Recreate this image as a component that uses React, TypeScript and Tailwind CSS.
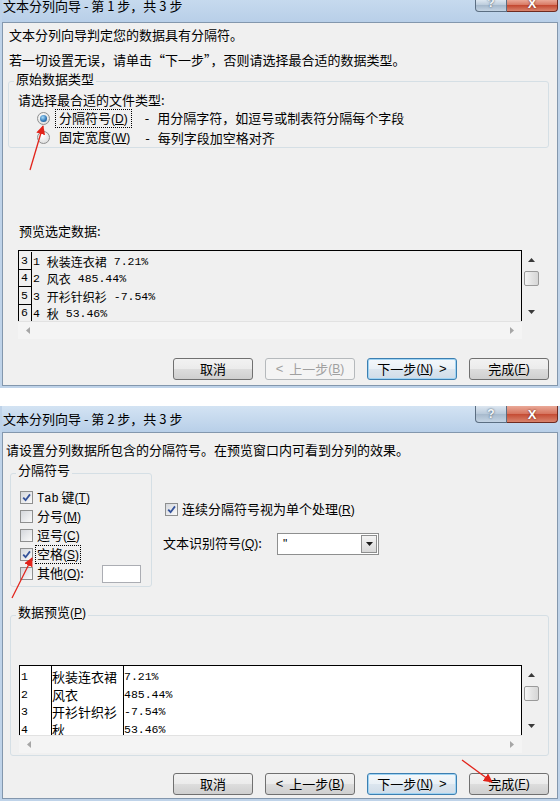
import type { ReactNode } from "react";

const ui = "font-['Microsoft_YaHei','Noto_Sans_CJK_SC',sans-serif]";
const mono = "font-['Liberation_Mono','Noto_Sans_CJK_SC',monospace]";

function Key({ k }: { k: string }) {
  return (
    <span className="font-['Liberation_Sans',sans-serif] text-[12px]">
      (<u>{k}</u>)
    </span>
  );
}

function CaptionButtons({ cropped }: { cropped?: boolean }) {
  return (
    <div className={cropped ? "flex h-[12px] overflow-hidden" : "flex h-[17px] overflow-hidden"}>
      <div className="flex h-full w-[32px] items-end justify-center rounded-bl-[4px] border border-t-0 border-[#5b6e82] bg-[linear-gradient(#dde7f1,#b8c9da_50%,#a6b9cc_50%,#c4d4e4)]">
        <span className="mb-[1px] font-['Liberation_Sans',sans-serif] text-[12px] font-bold leading-[13px] text-[#f4f7fa] [text-shadow:0_0_2px_#2e4258]">
          ?
        </span>
      </div>
      <div className="flex h-full w-[51px] items-end justify-center rounded-br-[4px] border border-t-0 border-l-0 border-[#6e2a20] bg-[linear-gradient(#eaa998,#d6735d_50%,#c44a32_50%,#d9846d)]">
        <span className="mb-[1px] font-['Liberation_Sans',sans-serif] text-[13px] font-bold leading-[13px] text-white [text-shadow:0_0_2px_#5a1a10]">
          X
        </span>
      </div>
    </div>
  );
}

function TitleBar({ title, cropped }: { title: string; cropped?: boolean }) {
  return (
    <div
      className={
        cropped
          ? "flex h-[22px] justify-between bg-[linear-gradient(#c6daee,#b8cfe8)]"
          : "flex h-[26px] justify-between bg-[linear-gradient(#d3e3f3,#b8cfe8)]"
      }
    >
      <div className={cropped ? "-mt-[2px] pl-[1px] leading-[16px]" : "pt-[5px] pl-[1px] leading-[16px]"}>{title}</div>
      <CaptionButtons cropped={cropped} />
    </div>
  );
}

function Btn({
  w,
  kind,
  children,
}: {
  w: string;
  kind?: "focus" | "off";
  children: ReactNode;
}) {
  const base = "flex h-[22px] items-center justify-center rounded-[3px] border leading-[16px]";
  if (kind === "off")
    return <div className={`${base} ${w} border-[#b5b9bc] bg-[#f4f4f4] text-[#a0a0a0]`}>{children}</div>;
  if (kind === "focus")
    return (
      <div
        className={`${base} ${w} border-[#3c7fb1] bg-[linear-gradient(#f4f8fb,#e9f0f6_50%,#dce6ef_50%,#d0dce8)] shadow-[inset_0_0_0_1px_#9fd3f3]`}
      >
        {children}
      </div>
    );
  return (
    <div className={`${base} ${w} border-[#707070] bg-[linear-gradient(#f2f2f2,#ebebeb_50%,#dddddd_50%,#cfcfcf)]`}>
      {children}
    </div>
  );
}

function Buttons({ backOff }: { backOff?: boolean }) {
  return (
    <div className="flex justify-end gap-[12px] pr-[8px]">
      <Btn w="w-[80px]">取消</Btn>
      <Btn w="w-[90px]" kind={backOff ? "off" : undefined}>
        <span className="mr-[6px] font-['Liberation_Sans',sans-serif]">&lt;</span>上一步
        <Key k="B" />
      </Btn>
      <Btn w="w-[90px]" kind="focus">
        下一步
        <Key k="N" />
        <span className="ml-[6px] font-['Liberation_Sans',sans-serif]">&gt;</span>
      </Btn>
      <Btn w="w-[80px]">
        完成
        <Key k="F" />
      </Btn>
    </div>
  );
}

function Radio({ on }: { on?: boolean }) {
  return (
    <span className="flex h-[13px] w-[13px] shrink-0 items-center justify-center rounded-full border border-[#8e8f8f] bg-[radial-gradient(circle_at_40%_35%,#ffffff,#d6d6d6)]">
      {on && (
        <span className="h-[7px] w-[7px] rounded-full bg-[radial-gradient(circle_at_40%_35%,#a8dcfa,#2e74b4_60%,#1a4b7c)]" />
      )}
    </span>
  );
}

function Check({ on }: { on?: boolean }) {
  return (
    <span className="flex h-[13px] w-[13px] shrink-0 items-center justify-center border border-[#8e8f8f] bg-[linear-gradient(135deg,#d4d7dc,#fafafa)]">
      {on && (
        <svg width="9" height="9" viewBox="0 0 9 9">
          <path d="M1.2 4.6 L3.6 7.2 L8 1.4" fill="none" stroke="#34529a" strokeWidth="1.8" />
        </svg>
      )}
    </span>
  );
}

function Tri({ dir, color }: { dir: "up" | "down" | "left" | "right"; color: string }) {
  const d = {
    up: "M0 4 L3.5 0 L7 4 Z",
    down: "M0 0 L7 0 L3.5 4 Z",
    left: "M4 0 L4 7 L0 3.5 Z",
    right: "M0 0 L4 3.5 L0 7 Z",
  }[dir];
  const vert = dir === "up" || dir === "down";
  return (
    <svg width={vert ? 7 : 4} height={vert ? 4 : 7} viewBox={vert ? "0 0 7 4" : "0 0 4 7"}>
      <path d={d} fill={color} />
    </svg>
  );
}

function VScroll({ h }: { h: string }) {
  return (
    <div className={`flex w-[18px] flex-col items-center ${h}`}>
      <div className="flex h-[19px] items-center">
        <Tri dir="up" color="#3a3a3a" />
      </div>
      <div className="mt-[2px] h-[15px] w-[15px] rounded-[2px] border border-[#9a9a9a] bg-[linear-gradient(90deg,#f6f6f6,#e4e4e4_50%,#d6d6d6)]" />
      <div className="flex-1" />
      <div className="flex h-[19px] items-center">
        <Tri dir="down" color="#3a3a3a" />
      </div>
    </div>
  );
}

function HScroll() {
  return (
    <div className="flex h-[18px] items-center justify-between border-t border-[#e2e2e2] bg-[#f4f4f4] px-[8px]">
      <Tri dir="left" color="#a6a6a6" />
      <Tri dir="right" color="#a6a6a6" />
    </div>
  );
}

const rows1 = [
  ["3", "1", "秋装连衣裙", "7.21%"],
  ["4", "2", "风衣", "485.44%"],
  ["5", "3", "开衫针织衫", "-7.54%"],
  ["6", "4", "秋", "53.46%"],
];

function PreviewOne() {
  return (
    <div className="ml-[15px] flex w-[522px]">
      <div className="flex w-[504px] flex-col">
        <div className="h-[71px] overflow-hidden border-l border-r border-t border-black bg-[#f0f0f0] pt-[1px]">
          {rows1.map(([n, i, name, v]) => (
            <div key={n} className="flex h-[17.5px] items-end whitespace-pre leading-[17px]">
              <span className={`w-[13px] border-r border-b border-black pl-[2px] text-[11.5px] ${mono}`}>{n}</span>
              <span className={`pl-[1px] text-[11.5px] ${mono}`}>{i + " "}</span>
              <span className="text-[12px]">{name}</span>
              <span className={`text-[11.5px] ${mono}`}>{" " + v}</span>
            </div>
          ))}
        </div>
        <HScroll />
      </div>
      <VScroll h="h-[71px]" />
    </div>
  );
}

function PreviewTwo() {
  return (
    <div className="ml-[8px] flex w-[521px]">
      <div className="flex w-[503px] flex-col">
        <div className="flex h-[70px] overflow-hidden border-l border-r border-t border-black bg-white">
          <div className={`w-[32px] border-r border-black pt-[2px] pl-[1px] text-[11.5px] leading-[17.5px] ${mono}`}>
            {rows1.map(([n, i]) => (
              <div key={n}>{i}</div>
            ))}
          </div>
          <div className="w-[72px] border-r border-black pt-[2px] text-[13px] leading-[17.5px]">
            {rows1.map(([n, , name]) => (
              <div key={n}>{name}</div>
            ))}
          </div>
          <div className={`pt-[2px] text-[11.5px] leading-[17.5px] ${mono}`}>
            {rows1.map(([n, , , v]) => (
              <div key={n}>{v}</div>
            ))}
          </div>
        </div>
        <HScroll />
      </div>
      <VScroll h="h-[70px]" />
    </div>
  );
}

function DialogOne() {
  return (
    <div className="flex h-[388px] flex-col bg-[#bfd3e9] px-[2px] pb-[2px]">
      <TitleBar title="文本分列向导 - 第 1 步，共 3 步" cropped />
      <div className="flex flex-1 flex-col border border-[#8397ad] bg-[#f0f0f0]">
        <p className="mt-[4px] pl-[6px] leading-[16px]">文本分列向导判定您的数据具有分隔符。</p>
        <p className="mt-[9px] pl-[6px] leading-[16px]">若一切设置无误，请单击“下一步”，否则请选择最合适的数据类型。</p>
        <fieldset className="mt-[3px] ml-[5px] w-[541px] rounded-[3px] border border-[#d5dfe5]">
          <legend className="ml-[5px] px-[2px] pb-[4px] leading-[16px]">原始数据类型</legend>
          <p className="mt-[1px] pl-[9px] leading-[16px]">请选择最合适的文件类型:</p>
          <div className="flex h-[20px] items-center pl-[28px]">
            <Radio on />
            <span className="ml-[5px] border border-dotted border-black px-[3px] leading-[15px]">
              分隔符号
              <Key k="D" />
            </span>
            <span className="ml-[13px] mr-[8px]">-</span>
            <span>用分隔字符，如逗号或制表符分隔每个字段</span>
          </div>
          <div className="flex h-[19px] items-center pl-[28px]">
            <Radio />
            <span className="ml-[5px] border border-transparent px-[3px] leading-[15px]">
              固定宽度
              <Key k="W" />
            </span>
            <span className="ml-[11px] mr-[8px]">-</span>
            <span>每列字段加空格对齐</span>
          </div>
        </fieldset>
        <p className="mt-[75px] pl-[16px] leading-[16px]">预览选定数据:</p>
        <div className="mt-[11px]">
          <PreviewOne />
        </div>
        <div className="mt-[19px]">
          <Buttons backOff />
        </div>
      </div>
    </div>
  );
}

const delims: [ReactNode, string, boolean][] = [
  [<><span className={`${mono} text-[12px]`}>Tab</span> 键</>, "T", true],
  ["分号", "M", false],
  ["逗号", "C", false],
  ["空格", "S", true],
  ["其他", "O", false],
];

function DialogTwo() {
  return (
    <div className="mt-[18px] flex h-[395px] flex-col bg-[#bfd3e9] px-[2px] pb-[2px]">
      <TitleBar title="文本分列向导 - 第 2 步，共 3 步" />
      <div className="flex flex-1 flex-col border border-[#8397ad] bg-[#f0f0f0]">
        <p className="mt-[9px] pl-[3px] leading-[16px]">请设置分列数据所包含的分隔符号。在预览窗口内可看到分列的效果。</p>
        <div className="mt-[4px] flex">
          <fieldset className="ml-[7px] w-[142px] rounded-[3px] border border-[#d5dfe5] pb-[3px]">
            <legend className="ml-[5px] px-[2px] pb-[6px] leading-[16px]">分隔符号</legend>
            <div className="mt-[4px]">
              {delims.map(([label, k, on]) => (
                <div key={k} className="flex h-[19px] items-center pl-[9px]">
                  <Check on={on} />
                  {k === "S" ? (
                    <span className="ml-[2px] border border-dotted border-black px-[1px] leading-[15px]">
                      {label}
                      <Key k={k} />
                    </span>
                  ) : (
                    <span className="ml-[2px] border border-transparent px-[1px] leading-[15px]">
                      {label}
                      <Key k={k} />
                      {k === "O" && ":"}
                    </span>
                  )}
                  {k === "O" && <span className="ml-[16px] h-[18px] w-[39px] border border-[#abadb3] bg-white" />}
                </div>
              ))}
            </div>
          </fieldset>
          <div className="ml-[11px] flex flex-col">
            <div className="mt-[39px] flex h-[16px] items-center gap-[4px] pl-[2px]">
              <Check on />
              <span className="leading-[16px]">
                连续分隔符号视为单个处理
                <Key k="R" />
              </span>
            </div>
            <div className="mt-[15px] flex h-[23px] items-center">
              <span className="w-[114px] leading-[16px]">
                文本识别符号
                <Key k="Q" />:
              </span>
              <div className="flex h-[22px] w-[102px] items-stretch border border-[#8e8f8f] bg-white">
                <span className="flex-1 pl-[5px] font-['Liberation_Sans',sans-serif] text-[12px] leading-[20px]">"</span>
                <span className="m-[1px] flex w-[16px] items-center justify-center border border-[#8e8f8f] bg-[linear-gradient(#f4f4f4,#d8d8d8)]">
                  <Tri dir="down" color="#1a1a1a" />
                </span>
              </div>
            </div>
          </div>
        </div>
        <fieldset className="mt-[17px] ml-[7px] w-[539px] rounded-[3px] border border-[#d5dfe5] pb-[2px]">
          <legend className="ml-[5px] px-[2px] pb-[6px] leading-[16px]">
            数据预览
            <Key k="P" />
          </legend>
          <div className="mt-[38px]">
            <PreviewTwo />
          </div>
        </fieldset>
        <div className="mt-[17px]">
          <Buttons />
        </div>
      </div>
    </div>
  );
}

function Arrows() {
  return (
    <svg className="pointer-events-none absolute inset-0" width="560" height="801">
      <defs>
        <marker id="head" viewBox="0 0 10 10" refX="9" refY="5" markerWidth="7" markerHeight="7" orient="auto">
          <path d="M0 0 L10 5 L0 10 Z" fill="#e2231a" />
        </marker>
      </defs>
      <line x1="30" y1="170" x2="43" y2="126" stroke="#e2231a" strokeWidth="1.3" markerEnd="url(#head)" />
      <line x1="12" y1="598" x2="32" y2="558" stroke="#e2231a" strokeWidth="1.3" markerEnd="url(#head)" />
      <line x1="462" y1="760" x2="492" y2="782" stroke="#e2231a" strokeWidth="1.3" markerEnd="url(#head)" />
    </svg>
  );
}

export default function App() {
  return (
    <div className={`relative h-[801px] w-[560px] overflow-hidden bg-white text-[13px] text-black ${ui}`}>
      <DialogOne />
      <DialogTwo />
      <Arrows />
    </div>
  );
}
